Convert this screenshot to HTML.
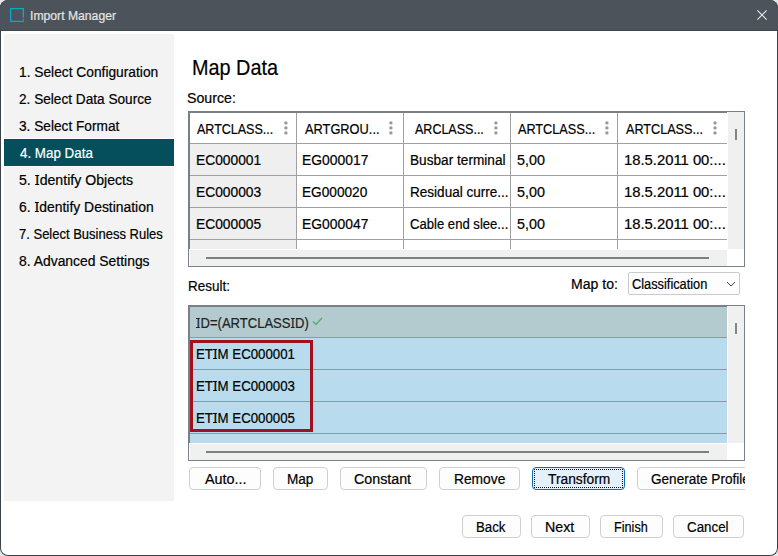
<!DOCTYPE html>
<html><head><meta charset="utf-8">
<style>
*{margin:0;padding:0;box-sizing:border-box}
html,body{width:778px;height:556px;overflow:hidden;background:#e6e6e6}
body{position:relative;font-family:"Liberation Sans",sans-serif;color:#000}
.abs{position:absolute;white-space:nowrap}
.win{position:absolute;left:0;top:0;width:778px;height:556px;background:#fff;border-radius:8px;overflow:hidden}
.wb{position:absolute;left:0;top:0;width:778px;height:556px;border:1px solid #38434a;border-top-color:#4c535a;border-radius:8px}
.box{position:absolute}
.dots{position:absolute;width:3px;height:13px}
.dots i{position:absolute;left:0;width:3px;height:3px;border-radius:50%;background:#9c9c9c}
.I{display:inline-block;position:relative;padding:0 0.5px}
.I::before,.I::after{content:"";position:absolute;left:50%;margin-left:-2px;width:4px;height:1px;background:currentColor}
.I::before{top:2px}.I::after{top:11px}
.btn{position:absolute;height:23px;border:1px solid #d0d0d0;border-radius:4px;background:#fdfdfd}

</style></head><body>
<div class="win">
<div class="box" style="left:0;top:0;width:778px;height:31px;background:#4c535a;border-bottom:1px solid #3d464c"></div>
<svg class="abs" style="left:10px;top:8px" width="14" height="14" viewBox="0 0 14 14"><path d="M13.35 9.8V0.65H0.65V13.35H14" stroke="#06adc6" stroke-width="1.3" fill="none"/><rect x="12.7" y="11" width="1.3" height="1.3" fill="#06adc6"/></svg>
<div class="abs" id="t_title" style="left:29.62px;top:9.59px;font-size:12.3px;line-height:12.3px;color:#e4e6e7;transform:scaleX(0.9907);transform-origin:0 0;-webkit-text-stroke:0.2px #e4e6e7;">Import Manager</div>
<svg class="abs" style="left:757px;top:10px" width="10" height="10" viewBox="0 0 10 10"><path d="M0.4 0.4L9.6 9.6M9.6 0.4L0.4 9.6" stroke="#eceeef" stroke-width="1.1"/></svg>
<div class="box" style="left:4px;top:34px;width:170px;height:467px;background:#f3f3f3"></div>
<div class="box" style="left:4px;top:138px;width:170px;height:29px;background:#fff"></div>
<div class="box" style="left:4px;top:139px;width:170px;height:27px;background:#054f5c"></div>
<div class="abs" id="s0" style="left:18.53px;top:65.15px;font-size:14px;line-height:14px;color:#000;transform:scaleX(0.9827);transform-origin:0 0;-webkit-text-stroke:0.2px #000;">1. Select Configuration</div>
<div class="abs" id="s1" style="left:18.51px;top:92.15px;font-size:14px;line-height:14px;color:#000;transform:scaleX(0.9734);transform-origin:0 0;-webkit-text-stroke:0.2px #000;">2. Select Data Source</div>
<div class="abs" id="s2" style="left:18.51px;top:119.15px;font-size:14px;line-height:14px;color:#000;transform:scaleX(0.9766);transform-origin:0 0;-webkit-text-stroke:0.2px #000;">3. Select Format</div>
<div class="abs" id="s3" style="left:19.53px;top:146.15px;font-size:14px;line-height:14px;color:#fff;transform:scaleX(0.9553);transform-origin:0 0;-webkit-text-stroke:0.2px #fff;">4. Map Data</div>
<div class="abs" id="s4" style="left:18.50px;top:173.15px;font-size:14px;line-height:14px;color:#000;transform:scaleX(1.0091);transform-origin:0 0;-webkit-text-stroke:0.2px #000;">5. <span class="I">I</span>dentify Objects</div>
<div class="abs" id="s5" style="left:18.51px;top:200.15px;font-size:14px;line-height:14px;color:#000;transform:scaleX(0.9925);transform-origin:0 0;-webkit-text-stroke:0.2px #000;">6. <span class="I">I</span>dentify Destination</div>
<div class="abs" id="s6" style="left:18.52px;top:227.15px;font-size:14px;line-height:14px;color:#000;transform:scaleX(0.9286);transform-origin:0 0;-webkit-text-stroke:0.2px #000;">7. Select Business Rules</div>
<div class="abs" id="s7" style="left:18.50px;top:254.15px;font-size:14px;line-height:14px;color:#000;transform:scaleX(0.9925);transform-origin:0 0;-webkit-text-stroke:0.2px #000;">8. Advanced Settings</div>
<div class="abs" id="t_map" style="left:192.15px;top:57.80px;font-size:21.5px;line-height:21.5px;color:#000;transform:scaleX(0.9231);transform-origin:0 0;-webkit-text-stroke:0.2px #000;">Map Data</div>
<div class="abs" id="t_src" style="left:187.39px;top:91.15px;font-size:14px;line-height:14px;color:#000;transform:scaleX(1.0132);transform-origin:0 0;-webkit-text-stroke:0.2px #000;">Source:</div>
<div class="box" style="left:188px;top:111px;width:557px;height:156px;border:1px solid #7b8088;background:#fff"></div>
<div class="box" style="left:189px;top:112px;width:538px;height:1px;background:#7b8088"></div>
<div class="box" style="left:189px;top:112px;width:1px;height:137px;background:#7b8088"></div>
<div class="box" style="left:728px;top:112px;width:16px;height:137px;background:#f0f0f0"></div>
<div class="box" style="left:735px;top:129px;width:2px;height:11px;background:#858585"></div>
<div class="box" style="left:190px;top:250px;width:537px;height:16px;background:#f0f0f0"></div>
<div class="box" style="left:206px;top:257px;width:503px;height:2px;background:#7e7e7e"></div>
<div class="box" style="left:190px;top:144px;width:106px;height:105px;background:#efefef"></div>
<div class="box" style="left:296px;top:113px;width:1px;height:136px;background:#a0a0a0"></div>
<div class="box" style="left:403px;top:113px;width:1px;height:136px;background:#a0a0a0"></div>
<div class="box" style="left:510px;top:113px;width:1px;height:136px;background:#a0a0a0"></div>
<div class="box" style="left:617px;top:113px;width:1px;height:136px;background:#a0a0a0"></div>
<div class="box" style="left:190px;top:143px;width:537px;height:1px;background:#a0a0a0"></div>
<div class="box" style="left:190px;top:175px;width:537px;height:1px;background:#a0a0a0"></div>
<div class="box" style="left:190px;top:207px;width:537px;height:1px;background:#a0a0a0"></div>
<div class="box" style="left:190px;top:239px;width:537px;height:1px;background:#a0a0a0"></div>
<div class="abs" id="h0" style="left:197.00px;top:122.15px;font-size:14px;line-height:14px;color:#000;transform:scaleX(0.8931);transform-origin:0 0;-webkit-text-stroke:0.2px #000;">ARTCLASS...</div>
<div class="abs" id="h1" style="left:304.62px;top:122.15px;font-size:14px;line-height:14px;color:#000;transform:scaleX(0.9151);transform-origin:0 0;-webkit-text-stroke:0.2px #000;">ARTGROU...</div>
<div class="abs" id="h2" style="left:414.92px;top:122.15px;font-size:14px;line-height:14px;color:#000;transform:scaleX(0.8936);transform-origin:0 0;-webkit-text-stroke:0.2px #000;">ARCLASS...</div>
<div class="abs" id="h3" style="left:517.54px;top:122.15px;font-size:14px;line-height:14px;color:#000;transform:scaleX(0.9050);transform-origin:0 0;-webkit-text-stroke:0.2px #000;">ARTCLASS...</div>
<div class="abs" id="h4" style="left:625.93px;top:122.15px;font-size:14px;line-height:14px;color:#000;transform:scaleX(0.9025);transform-origin:0 0;-webkit-text-stroke:0.2px #000;">ARTCLASS...</div>
<svg class="abs" style="left:282px;top:119px" width="7" height="17" viewBox="0 0 7 17"><circle cx="3.90" cy="3.9" r="1.7" fill="#999"/><circle cx="3.90" cy="8.9" r="1.7" fill="#999"/><circle cx="3.90" cy="13.9" r="1.7" fill="#999"/></svg>
<svg class="abs" style="left:387px;top:119px" width="7" height="17" viewBox="0 0 7 17"><circle cx="3.90" cy="3.9" r="1.7" fill="#999"/><circle cx="3.90" cy="8.9" r="1.7" fill="#999"/><circle cx="3.90" cy="13.9" r="1.7" fill="#999"/></svg>
<svg class="abs" style="left:492px;top:119px" width="7" height="17" viewBox="0 0 7 17"><circle cx="3.90" cy="3.9" r="1.7" fill="#999"/><circle cx="3.90" cy="8.9" r="1.7" fill="#999"/><circle cx="3.90" cy="13.9" r="1.7" fill="#999"/></svg>
<svg class="abs" style="left:603px;top:119px" width="7" height="17" viewBox="0 0 7 17"><circle cx="3.90" cy="3.9" r="1.7" fill="#999"/><circle cx="3.90" cy="8.9" r="1.7" fill="#999"/><circle cx="3.90" cy="13.9" r="1.7" fill="#999"/></svg>
<svg class="abs" style="left:712px;top:119px" width="7" height="17" viewBox="0 0 7 17"><circle cx="3.00" cy="3.9" r="1.7" fill="#999"/><circle cx="3.00" cy="8.9" r="1.7" fill="#999"/><circle cx="3.00" cy="13.9" r="1.7" fill="#999"/></svg>
<div class="abs" id="r0c0" style="left:195.52px;top:153.15px;font-size:14px;line-height:14px;color:#000;transform:scaleX(0.9846);transform-origin:0 0;-webkit-text-stroke:0.2px #000;">EC000001</div>
<div class="abs" id="r0c1" style="left:302.20px;top:153.15px;font-size:14px;line-height:14px;color:#000;transform:scaleX(0.9910);transform-origin:0 0;-webkit-text-stroke:0.2px #000;">EG000017</div>
<div class="abs" id="r0c2" style="left:409.54px;top:153.15px;font-size:14px;line-height:14px;color:#000;transform:scaleX(0.9749);transform-origin:0 0;-webkit-text-stroke:0.2px #000;">Busbar terminal</div>
<div class="abs" id="r0c3" style="left:516.78px;top:153.15px;font-size:14px;line-height:14px;color:#000;transform:scaleX(1.0239);transform-origin:0 0;-webkit-text-stroke:0.2px #000;">5,00</div>
<div class="abs" id="r0c4" style="left:623.96px;top:153.15px;font-size:14px;line-height:14px;color:#000;transform:scaleX(1.0575);transform-origin:0 0;-webkit-text-stroke:0.2px #000;">18.5.2011 00:...</div>
<div class="abs" id="r1c0" style="left:195.52px;top:185.15px;font-size:14px;line-height:14px;color:#000;transform:scaleX(0.9846);transform-origin:0 0;-webkit-text-stroke:0.2px #000;">EC000003</div>
<div class="abs" id="r1c1" style="left:302.22px;top:185.15px;font-size:14px;line-height:14px;color:#000;transform:scaleX(0.9757);transform-origin:0 0;-webkit-text-stroke:0.2px #000;">EG000020</div>
<div class="abs" id="r1c2" style="left:409.56px;top:185.15px;font-size:14px;line-height:14px;color:#000;transform:scaleX(0.9677);transform-origin:0 0;-webkit-text-stroke:0.2px #000;">Residual curre...</div>
<div class="abs" id="r1c3" style="left:516.78px;top:185.15px;font-size:14px;line-height:14px;color:#000;transform:scaleX(1.0239);transform-origin:0 0;-webkit-text-stroke:0.2px #000;">5,00</div>
<div class="abs" id="r1c4" style="left:623.96px;top:185.15px;font-size:14px;line-height:14px;color:#000;transform:scaleX(1.0575);transform-origin:0 0;-webkit-text-stroke:0.2px #000;">18.5.2011 00:...</div>
<div class="abs" id="r2c0" style="left:195.52px;top:217.15px;font-size:14px;line-height:14px;color:#000;transform:scaleX(0.9846);transform-origin:0 0;-webkit-text-stroke:0.2px #000;">EC000005</div>
<div class="abs" id="r2c1" style="left:302.20px;top:217.15px;font-size:14px;line-height:14px;color:#000;transform:scaleX(0.9910);transform-origin:0 0;-webkit-text-stroke:0.2px #000;">EG000047</div>
<div class="abs" id="r2c2" style="left:409.52px;top:217.15px;font-size:14px;line-height:14px;color:#000;transform:scaleX(0.9353);transform-origin:0 0;-webkit-text-stroke:0.2px #000;">Cable end slee...</div>
<div class="abs" id="r2c3" style="left:516.78px;top:217.15px;font-size:14px;line-height:14px;color:#000;transform:scaleX(1.0239);transform-origin:0 0;-webkit-text-stroke:0.2px #000;">5,00</div>
<div class="abs" id="r2c4" style="left:623.96px;top:217.15px;font-size:14px;line-height:14px;color:#000;transform:scaleX(1.0575);transform-origin:0 0;-webkit-text-stroke:0.2px #000;">18.5.2011 00:...</div>
<div class="abs" id="t_res" style="left:188.33px;top:279.15px;font-size:14px;line-height:14px;color:#000;transform:scaleX(0.9612);transform-origin:0 0;-webkit-text-stroke:0.2px #000;">Result:</div>
<div class="abs" id="t_mapto" style="left:570.61px;top:277.15px;font-size:14px;line-height:14px;color:#000;transform:scaleX(1.0051);transform-origin:0 0;-webkit-text-stroke:0.2px #000;">Map to:</div>
<div class="box" style="left:628px;top:272px;width:112px;height:23px;border:1px solid #cacaca;border-radius:2px;background:#fdfdfd"></div>
<div class="abs" id="t_cls" style="left:632.09px;top:277.15px;font-size:14px;line-height:14px;color:#000;transform:scaleX(0.9136);transform-origin:0 0;-webkit-text-stroke:0.2px #000;">Classification</div>
<svg class="abs" style="left:726px;top:281px" width="10" height="7" viewBox="0 0 10 7"><path d="M1 1L5 5L9 1" stroke="#404040" stroke-width="1" fill="none"/></svg>
<div class="box" style="left:188px;top:305px;width:557px;height:156px;border:1px solid #7b8088;background:#fff"></div>
<div class="box" style="left:189px;top:306px;width:538px;height:1px;background:#7b8088"></div>
<div class="box" style="left:189px;top:306px;width:1px;height:137px;background:#7b8088"></div>
<div class="box" style="left:728px;top:306px;width:16px;height:137px;background:#f0f0f0"></div>
<div class="box" style="left:735px;top:323px;width:2px;height:11px;background:#858585"></div>
<div class="box" style="left:190px;top:444px;width:537px;height:16px;background:#f0f0f0"></div>
<div class="box" style="left:206px;top:451px;width:503px;height:2px;background:#7e7e7e"></div>
<div class="box" style="left:190px;top:307px;width:537px;height:30px;background:#b3cbcf"></div>
<div class="box" style="left:190px;top:338px;width:537px;height:105px;background:#b8dcee"></div>
<div class="box" style="left:190px;top:337px;width:537px;height:1px;background:#979797"></div>
<div class="box" style="left:190px;top:369px;width:537px;height:1px;background:#979797"></div>
<div class="box" style="left:190px;top:401px;width:537px;height:1px;background:#979797"></div>
<div class="box" style="left:190px;top:433px;width:537px;height:1px;background:#979797"></div>
<div class="abs" id="t_id" style="left:196.05px;top:316.15px;font-size:14px;line-height:14px;color:#222;transform:scaleX(0.9310);transform-origin:0 0;-webkit-text-stroke:0.2px #222;"><span class="I">I</span>D=(ARTCLASS<span class="I">I</span>D)</div>
<svg class="abs" style="left:312px;top:317px" width="11" height="9" viewBox="0 0 11 9"><path d="M1 4.5L4 7.5L10 1" stroke="#4caf50" stroke-width="1.2" fill="none"/></svg>
<div class="abs" id="e0" style="left:196.36px;top:347.15px;font-size:14px;line-height:14px;color:#000;transform:scaleX(0.9472);transform-origin:0 0;-webkit-text-stroke:0.2px #000;">ET<span class="I">I</span>M EC000001</div>
<div class="abs" id="e1" style="left:196.36px;top:379.15px;font-size:14px;line-height:14px;color:#000;transform:scaleX(0.9472);transform-origin:0 0;-webkit-text-stroke:0.2px #000;">ET<span class="I">I</span>M EC000003</div>
<div class="abs" id="e2" style="left:196.36px;top:411.15px;font-size:14px;line-height:14px;color:#000;transform:scaleX(0.9472);transform-origin:0 0;-webkit-text-stroke:0.2px #000;">ET<span class="I">I</span>M EC000005</div>
<div class="box" style="left:190px;top:340px;width:123px;height:92px;border:3px solid #a3121c"></div>
<div class="btn" style="left:189px;top:467px;width:72px;height:23px"></div>
<div class="abs" id="b_auto" style="left:205.00px;top:472.15px;font-size:14px;line-height:14px;color:#000;transform:scaleX(1.0260);transform-origin:0 0;-webkit-text-stroke:0.2px #000;">Auto...</div>
<div class="btn" style="left:273px;top:467px;width:55px;height:23px"></div>
<div class="abs" id="b_map" style="left:287.11px;top:472.15px;font-size:14px;line-height:14px;color:#000;transform:scaleX(0.9704);transform-origin:0 0;-webkit-text-stroke:0.2px #000;">Map</div>
<div class="btn" style="left:340px;top:467px;width:87px;height:23px"></div>
<div class="abs" id="b_const" style="left:353.98px;top:472.15px;font-size:14px;line-height:14px;color:#000;transform:scaleX(1.0182);transform-origin:0 0;-webkit-text-stroke:0.2px #000;">Constant</div>
<div class="btn" style="left:439px;top:467px;width:81px;height:23px"></div>
<div class="abs" id="b_rem" style="left:453.82px;top:472.15px;font-size:14px;line-height:14px;color:#000;transform:scaleX(0.9846);transform-origin:0 0;-webkit-text-stroke:0.2px #000;">Remove</div>
<div class="box" style="left:532px;top:467px;width:93px;height:23px;border:1px solid #0a6fc2;border-radius:4px;background:#e4f0fa"></div>
<div class="box" style="left:534px;top:469px;width:89px;height:19px;border:1px dotted #111"></div>
<div class="abs" id="b_tr" style="left:547.50px;top:472.15px;font-size:14px;line-height:14px;color:#000;transform:scaleX(0.9841);transform-origin:0 0;-webkit-text-stroke:0.2px #000;">Transform</div>
<div class="box" style="left:637px;top:467px;width:108px;height:23px;overflow:hidden;visibility:visible">
<div class="btn" style="left:0;top:0;width:130px;height:23px"></div>
<div class="abs" id="b_gen" style="left:14.00px;top:5.15px;font-size:14px;line-height:14px;color:#000;transform:scaleX(0.9690);transform-origin:0 0;-webkit-text-stroke:0.2px #000;">Generate Profile</div>
</div>
<div class="btn" style="left:462px;top:515px;width:59px;height:23px"></div>
<div class="abs" id="b_back" style="left:476.26px;top:520.15px;font-size:14px;line-height:14px;color:#000;transform:scaleX(0.9462);transform-origin:0 0;-webkit-text-stroke:0.2px #000;">Back</div>
<div class="btn" style="left:531px;top:515px;width:59px;height:23px"></div>
<div class="abs" id="b_next" style="left:545.17px;top:520.15px;font-size:14px;line-height:14px;color:#000;transform:scaleX(1.0163);transform-origin:0 0;-webkit-text-stroke:0.2px #000;">Next</div>
<div class="btn" style="left:600px;top:515px;width:63px;height:23px"></div>
<div class="abs" id="b_fin" style="left:613.95px;top:520.15px;font-size:14px;line-height:14px;color:#000;transform:scaleX(0.9033);transform-origin:0 0;-webkit-text-stroke:0.2px #000;">Finish</div>
<div class="btn" style="left:673px;top:515px;width:71px;height:23px"></div>
<div class="abs" id="b_can" style="left:687.05px;top:520.15px;font-size:14px;line-height:14px;color:#000;transform:scaleX(0.9524);transform-origin:0 0;-webkit-text-stroke:0.2px #000;">Cancel</div>
</div><div class="wb"></div>
<div class="box" style="left:0;top:0;width:778px;height:30px;overflow:hidden"><div class="box" style="left:0;top:0;width:778px;height:556px;border:1px solid #4c535a;border-radius:8px"></div></div>
</body></html>
